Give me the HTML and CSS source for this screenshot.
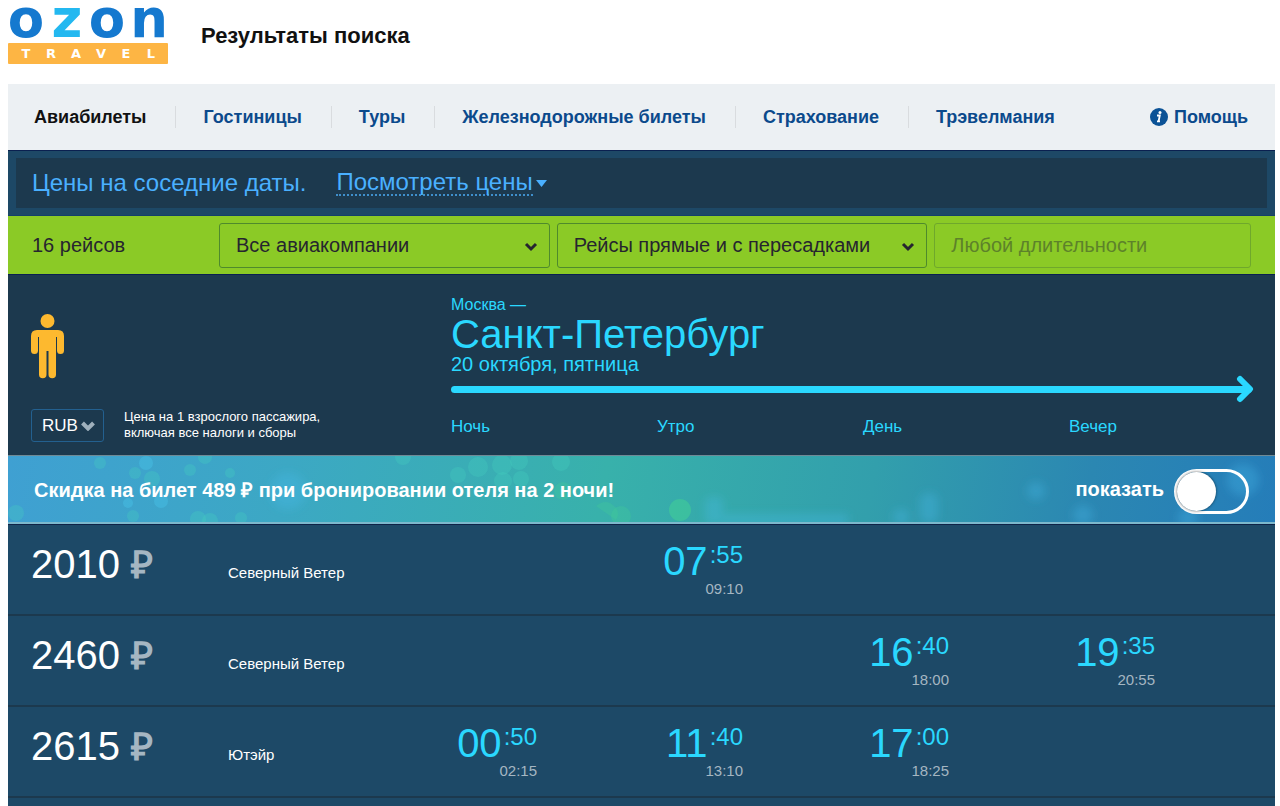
FILE: index.html
```html
<!DOCTYPE html>
<html lang="ru">
<head>
    <meta charset="utf-8">
    <title>Результаты поиска</title>
    <link rel="stylesheet" href="styles.css">
</head>
<body>
    <header class="header">
        <a class="logo" href="#" aria-label="OZON Travel">
            <svg width="160" height="58" viewBox="0 0 160 58">
                <text class="logo-name" x="18 59 99 141" y="29">o<tspan class="logo-z">z</tspan>on</text>
                <rect y="35" width="160" height="21" rx="1" fill="#fdb544"/>
                <text class="logo-travel" x="18 43 68 93 118 143" y="50">TRAVEL</text>
            </svg>
        </a>
        <h1>Результаты поиска</h1>
    </header>

    <nav class="nav">
        <a class="active" href="#">Авиабилеты</a>
        <a href="#">Гостиницы</a>
        <a href="#">Туры</a>
        <a href="#">Железнодорожные билеты</a>
        <a href="#">Страхование</a>
        <a href="#">Трэвелмания</a>
        <a class="help" href="#">
            <svg width="18" height="18" viewBox="0 0 18 18">
                <circle cx="9" cy="9" r="9" fill="#0b5296"/>
                <circle cx="10" cy="4.500" r="1.500" fill="#fff"/>
                <path d="M7 7.500h2.800L8.600 13.200M7 13.300h3" fill="none" stroke="#fff" stroke-width="1.800"/>
            </svg>
            Помощь
        </a>
    </nav>

    <section class="nearby">
        <div class="nearby-inner">
            <span>Цены на соседние даты.</span>
            <button class="nearby-button" type="button">
                <span>Посмотреть цены</span>
                <svg width="11" height="7" viewBox="0 0 11 7"><path d="M0 0h11L5.500 7z" fill="#4ab0ff"/></svg>
            </button>
        </div>
    </section>

    <form class="filters">
        <span>16 рейсов</span>
        <div class="select">
            <select aria-label="Авиакомпании"><option>Все авиакомпании</option></select>
            <svg width="14" height="10" viewBox="0 0 14 10"><path d="M2 2l5 5 5-5" fill="none" stroke="#26252f" stroke-width="3"/></svg>
        </div>
        <div class="select">
            <select aria-label="Пересадки"><option>Рейсы прямые и с пересадками</option></select>
            <svg width="14" height="10" viewBox="0 0 14 10"><path d="M2 2l5 5 5-5" fill="none" stroke="#26252f" stroke-width="3"/></svg>
        </div>
        <input type="text" placeholder="Любой длительности" aria-label="Длительность">
    </form>

    <section class="route">
        <div class="passengers">
            <svg width="33" height="65" viewBox="0 0 33 65" fill="#fdb92f">
                <circle cx="16.500" cy="7" r="7"/>
                <path d="M6 16h21q6 0 6 6v14.500a3.500 3.500 0 0 1-7 0V23h-1v37.500a3.700 3.700 0 0 1-7.500 0V37h-2v23.500a3.700 3.700 0 0 1-7.500 0V23H7v13.500a3.500 3.500 0 0 1-7 0V22q0-6 6-6z"/>
            </svg>
            <div class="currency">
                <div class="select">
                    <select aria-label="Валюта"><option>RUB</option></select>
                    <svg width="14" height="10" viewBox="0 0 14 10"><path d="M1.500 2L7 7.500 12.500 2" fill="none" stroke="#9fb0bc" stroke-width="4"/></svg>
                </div>
                <p>Цена на 1 взрослого пассажира,<br>включая все налоги и сборы</p>
            </div>
        </div>
        <div class="direction">
            <div class="from">Москва —</div>
            <h2>Санкт-Петербург</h2>
            <div class="date">20 октября, пятница</div>
            <div class="arrow">
                <svg width="18" height="28" viewBox="0 0 18 28"><path d="M4 4l10 10L4 24" fill="none" stroke="#2ad8ff" stroke-width="6" stroke-linecap="round" stroke-linejoin="round"/></svg>
            </div>
            <div class="periods">
                <span>Ночь</span>
                <span>Утро</span>
                <span>День</span>
                <span>Вечер</span>
            </div>
        </div>
    </section>

    <section class="promo">
        <svg class="promo-bg" viewBox="0 0 1267 68" preserveAspectRatio="xMidYMid slice">
            <defs>
                <filter id="soft"><feGaussianBlur stdDeviation="4"/></filter>
            </defs>
            <g fill="#45cfc0" fill-opacity=".3">
                <circle cx="8" cy="58" r="8"/>
                <circle cx="92" cy="8" r="6"/>
                <circle cx="127" cy="18" r="6"/>
                <circle cx="182" cy="15" r="6"/>
                <circle cx="197" cy="2" r="7"/>
                <circle cx="222" cy="18" r="5"/>
                <circle cx="144" cy="24" r="8"/>
                <circle cx="125" cy="61" r="6"/>
                <circle cx="190" cy="64" r="8"/>
                <circle cx="202" cy="66" r="8"/>
                <circle cx="233" cy="63" r="6"/>
                <circle cx="395" cy="2" r="8"/>
                <circle cx="450" cy="20" r="8"/>
                <circle cx="470" cy="12" r="10"/>
                <circle cx="494" cy="10" r="10"/>
                <circle cx="511" cy="6" r="9"/>
                <circle cx="495" cy="26" r="9"/>
                <circle cx="513" cy="24" r="8"/>
                <circle cx="553" cy="7" r="9"/>
            </g>
            <g fill="#48c2e6" fill-opacity=".45">
                <circle cx="138" cy="8" r="7"/>
                <circle cx="153" cy="46" r="7"/>
                <circle cx="120" cy="48" r="5"/>
            </g>
            <g fill="#42d394" fill-opacity=".25">
                <circle cx="555" cy="36" r="9"/>
                <path d="M588 51q10-8 18 0a10 10 0 0 1 2 14z"/>
                <circle cx="613" cy="61" r="10"/>
            </g>
            <circle cx="672" cy="55" r="11" fill="#42d394" fill-opacity=".5"/>
            <g fill="#48bdf0" fill-opacity=".3" filter="url(#soft)">
                <circle cx="280" cy="36" r="18"/>
                <rect x="697" y="42" width="18" height="28" rx="6"/>
                <rect x="715" y="59" width="125" height="12"/>
                <rect x="912" y="38" width="18" height="30" rx="8"/>
                <circle cx="893" cy="62" r="8"/>
                <circle cx="1028" cy="36" r="9"/>
                <circle cx="1075" cy="60" r="10"/>
                <circle cx="1180" cy="63" r="10"/>
                <circle cx="1235" cy="25" r="16"/>
            </g>
        </svg>
        <strong class="promo-text">Скидка на билет 489 ₽ при бронировании отеля на 2 ночи!</strong>
        <label class="toggle">
            <span class="promo-text">показать</span>
            <input type="checkbox">
        </label>
    </section>

    <table class="flights">
        <colgroup>
            <col class="col-price">
            <col class="col-airline">
            <col>
            <col>
            <col>
            <col>
        </colgroup>
        <tbody>
            <tr>
                <td class="price">2010 <span>₽</span></td>
                <td class="airline">Северный Ветер</td>
                <td></td>
                <td><a class="time" href="#"><b>07</b><i>:55</i><small>09:10</small></a></td>
                <td></td>
                <td></td>
            </tr>
            <tr>
                <td class="price">2460 <span>₽</span></td>
                <td class="airline">Северный Ветер</td>
                <td></td>
                <td></td>
                <td><a class="time" href="#"><b>16</b><i>:40</i><small>18:00</small></a></td>
                <td><a class="time" href="#"><b>19</b><i>:35</i><small>20:55</small></a></td>
            </tr>
            <tr>
                <td class="price">2615 <span>₽</span></td>
                <td class="airline">Ютэйр</td>
                <td><a class="time" href="#"><b>00</b><i>:50</i><small>02:15</small></a></td>
                <td><a class="time" href="#"><b>11</b><i>:40</i><small>13:10</small></a></td>
                <td><a class="time" href="#"><b>17</b><i>:00</i><small>18:25</small></a></td>
                <td></td>
            </tr>
        </tbody>
    </table>
</body>
</html>
```

FILE: styles.css
```css
* {
    box-sizing: border-box;
}
html {
    background: #fff;
}
body {
    margin: 0 5px 0 8px;
    font-family: "Liberation Sans", Arial, Helvetica, sans-serif;
    color: #fff;
    background: #1d4967;
    min-height: 100vh;
}
a {
    text-decoration: none;
}
h1, h2, p {
    margin: 0;
    font-weight: normal;
}
select, input, button {
    font: inherit;
    color: inherit;
    margin: 0;
}

/* header */
.header {
    display: flex;
    gap: 33px;
    height: 84px;
    padding-top: 8px;
    background: #fff;
}
.header h1 {
    font-size: 22px;
    line-height: 56px;
    font-weight: bold;
    color: #111;
}
.logo svg {
    overflow: visible;
}
.logo text {
    text-anchor: middle;
}
.logo-name {
    font: bold 53px "DejaVu Sans", sans-serif;
    fill: #1579cf;
}
.logo-z {
    fill: #23b8f0;
}
.logo-travel {
    font: bold 13px "DejaVu Sans", sans-serif;
    fill: #fff;
}

/* navigation */
.nav {
    display: flex;
    align-items: center;
    height: 66px;
    background: #ecf0f3;
    font-size: 18px;
    line-height: 22px;
    font-weight: bold;
}
.nav a {
    padding: 0 29px 0 27px;
    color: #0b4a8c;
    border-left: 1px solid #d9dcdf;
}
.nav .active {
    padding-left: 26px;
    color: #111;
    border-left: 0;
}
.nav .help {
    display: flex;
    align-items: center;
    gap: 6px;
    margin-left: auto;
    padding-right: 27px;
    border-left: 0;
}

/* prices for nearby dates */
.nearby {
    padding: 7px 8px;
    background: #1d4866;
    border-top: 1px solid #0a2050;
}
.nearby-inner {
    display: flex;
    align-items: center;
    gap: 30px;
    height: 50px;
    padding: 0 16px;
    background: #1c394e;
    color: #4ab0ff;
    font-size: 24px;
    line-height: 26px;
}
.nearby-button {
    display: flex;
    align-items: center;
    gap: 3px;
    padding: 0;
    border: 0;
    background: none;
    cursor: pointer;
}
.nearby-button span {
    line-height: 24px;
    border-bottom: 2px dotted #3f8fcb;
}

/* filters */
.filters {
    display: grid;
    grid-template-columns: 180px 331fr 371fr 317fr;
    gap: 7px;
    align-items: center;
    height: 60px;
    padding: 0 24px;
    background: #8bca26;
    border-top: 1px solid #14406a;
    border-bottom: 1px solid #0a2050;
    color: #26252f;
    font-size: 20px;
}
.select {
    position: relative;
}
.select select {
    appearance: none;
    display: block;
    width: 100%;
    height: 45px;
    padding: 0 16px;
    border: 1px solid #4f8a2c;
    border-radius: 3px;
    background: none;
}
.select svg {
    position: absolute;
    right: 12px;
    top: 19px;
    pointer-events: none;
}
.filters input {
    width: 100%;
    height: 45px;
    padding: 0 16px;
    border: 1px solid #6fa82c;
    border-radius: 3px;
    background: none;
}
.filters input::placeholder {
    color: #5d822a;
    opacity: 1;
}

/* route */
.route {
    display: grid;
    grid-template-columns: 443px 1fr;
    height: 180px;
    background: #1c394e;
}
.passengers {
    display: flex;
    flex-direction: column;
    justify-content: space-between;
    padding: 39px 0 13px 23px;
}
.currency {
    display: flex;
    gap: 20px;
    font-size: 13px;
    line-height: 16px;
}
.currency .select {
    width: 73px;
    font-size: 17px;
}
.currency .select select {
    height: 33px;
    padding: 0 10px;
    border-color: #23608f;
}
.currency .select svg {
    right: 9px;
    top: 12px;
}
.direction {
    padding-top: 21px;
    color: #2ad8ff;
}
.from {
    font-size: 16px;
    line-height: 18px;
}
.direction h2 {
    font-size: 40px;
    line-height: 40px;
}
.date {
    font-size: 20px;
    line-height: 20px;
}
.arrow {
    display: flex;
    align-items: center;
    height: 30px;
    margin-right: 21px;
}
.arrow::before {
    content: "";
    flex: 1;
    height: 7px;
    margin-right: -16px;
    border-radius: 4px;
    background: #2ad8ff;
}
.periods {
    display: grid;
    grid-template-columns: repeat(4, 1fr);
    padding-top: 12px;
    font-size: 17px;
    line-height: 22px;
}

/* hotel promo */
.promo {
    position: relative;
    display: flex;
    align-items: center;
    justify-content: space-between;
    height: 69px;
    padding: 4px 26px 0;
    background: linear-gradient(100deg, #3fa0d2 0%, #3ca8c4 22%, #38b1ab 47%, #329fac 68%, #2b87b2 85%, #257db9 100%);
    border-top: 1px solid #6f8a96;
    border-bottom: 2px solid #7db8cc;
    font-size: 20px;
    font-weight: bold;
}
.promo-bg {
    position: absolute;
    inset: 0;
    width: 100%;
    height: 100%;
}
.promo-text {
    position: relative;
    padding-bottom: 4px;
}
.toggle {
    position: relative;
    display: flex;
    align-items: center;
    gap: 10px;
}
.toggle input {
    appearance: none;
    width: 75px;
    height: 45px;
    border: 3px solid #fff;
    border-radius: 23px;
    cursor: pointer;
}
.toggle input::before {
    content: "";
    display: block;
    width: 39px;
    height: 39px;
    border-radius: 50%;
    background: #fff;
    box-shadow: 0 0 3px rgba(0,0,0,0.6);
}
.toggle input:checked::before {
    margin-left: auto;
}

/* flights */
.flights {
    width: 100%;
    table-layout: fixed;
    border-collapse: separate;
    border-spacing: 0;
    border-top: 1px solid #0f2347;
    background: #1d4967;
}
.col-price {
    width: 220px;
}
.col-airline {
    width: 223px;
}
.flights td {
    height: 91px;
    padding: 0;
    vertical-align: top;
    border-bottom: 2px solid #1c394e;
}
.flights .price {
    padding: 16px 0 0 23px;
    font-size: 40px;
    line-height: 46px;
}
.price span {
    font-weight: bold;
    font-size: 38px;
    color: #a5b6c2;
}
.flights .airline {
    padding-top: 38px;
    font-size: 15px;
    line-height: 20px;
}
.time {
    display: grid;
    grid-template-columns: 1fr auto;
    column-gap: 2px;
    width: 86px;
    padding-top: 13px;
    color: #2ad8ff;
    text-align: right;
}
.time b {
    font-size: 40px;
    line-height: 46px;
    font-weight: normal;
}
.time i {
    font-size: 24px;
    line-height: 34px;
    font-style: normal;
}
.time small {
    grid-column: 1 / 3;
    font-size: 15px;
    line-height: 10px;
    color: #a5b6c2;
}
```
